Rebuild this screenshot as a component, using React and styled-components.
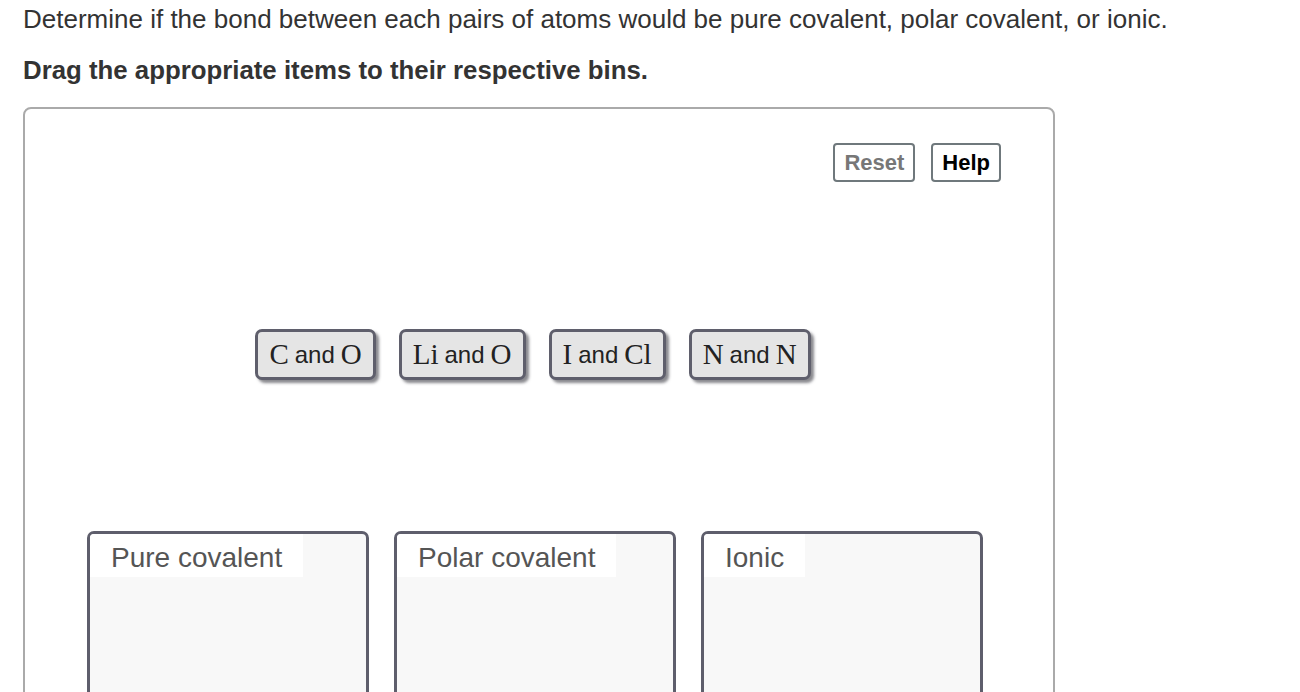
import React from 'react';
import styled, { createGlobalStyle } from 'styled-components';

const GlobalStyle = createGlobalStyle`
  html, body {
    margin: 0;
    padding: 0;
    background: #fff;
    font-family: "Liberation Sans", Arial, sans-serif;
    overflow: hidden;
  }
`;

const Page = styled.div`
  padding: 4px 23px 0 23px;
  width: 1032px;
`;

const Prompt = styled.p`
  margin: 0;
  font-size: 26px;
  line-height: 30px;
  color: #333;
  white-space: nowrap;
`;

const Instruction = styled.p`
  margin: 21px 0 0;
  font-size: 25.8px;
  line-height: 30px;
  font-weight: bold;
  color: #333;
  white-space: nowrap;
`;

const Panel = styled.div`
  margin-top: 22px;
  border: 2px solid #aaa;
  border-radius: 8px;
  height: 640px;
  box-sizing: border-box;
  padding: 34px 52px 0 62px;
`;

const Toolbar = styled.div`
  display: flex;
  justify-content: flex-end;
  gap: 16px;
`;

const ToolButton = styled.button`
  font-family: "Liberation Sans", Arial, sans-serif;
  font-size: 22px;
  font-weight: bold;
  height: 39px;
  padding: 0 9px;
  background: #fff;
  border: 2px solid #6f787c;
  border-radius: 4px;
  color: ${(p) => (p.muted ? '#777' : '#000')};
`;

const ChipRow = styled.div`
  display: flex;
  justify-content: center;
  gap: 23px;
  margin-top: 147px;
  padding-right: 22px;
`;

const Chip = styled.div`
  height: 51px;
  box-sizing: border-box;
  display: flex;
  align-items: center;
  padding: 0 11px;
  background: #e5e5e5;
  border: 3px solid #5f5f6c;
  border-radius: 7px;
  box-shadow: 3px 3px 3px rgba(40, 40, 50, 0.55);
  white-space: nowrap;
`;

const Atom = styled.span`
  font-family: "Liberation Serif", "Times New Roman", serif;
  font-size: 29px;
  color: #222;
`;

const Word = styled.span`
  font-family: "Liberation Sans", Arial, sans-serif;
  font-size: 24px;
  color: #222;
  margin: 0 6px 0 6px;
`;

const BinRow = styled.div`
  display: flex;
  gap: 25px;
  margin-top: 151px;
`;

const Bin = styled.div`
  width: 282px;
  height: 200px;
  box-sizing: border-box;
  background: #f8f8f8;
  border: 3px solid #5e5e6c;
  border-radius: 7px;
`;

const BinLabel = styled.div`
  display: inline-block;
  background: #fff;
  height: 43px;
  line-height: 48px;
  padding: 0 21px;
  font-size: 28px;
  color: #555;
  border-top-left-radius: 4px;
`;

const pairs = [
  ['C', 'O'],
  ['Li', 'O'],
  ['I', 'Cl'],
  ['N', 'N'],
];

const bins = ['Pure covalent', 'Polar covalent', 'Ionic'];

export default function App() {
  return (
    <>
      <GlobalStyle />
      <Page>
        <Prompt>
          Determine if the bond between each pairs of atoms would be pure covalent, polar covalent, or ionic.
        </Prompt>
        <Instruction>Drag the appropriate items to their respective bins.</Instruction>
        <Panel>
          <Toolbar>
            <ToolButton muted>Reset</ToolButton>
            <ToolButton>Help</ToolButton>
          </Toolbar>
          <ChipRow>
            {pairs.map(([a, b]) => (
              <Chip key={a + b}>
                <Atom>{a}</Atom>
                <Word>and</Word>
                <Atom>{b}</Atom>
              </Chip>
            ))}
          </ChipRow>
          <BinRow>
            {bins.map((name) => (
              <Bin key={name}>
                <BinLabel>{name}</BinLabel>
              </Bin>
            ))}
          </BinRow>
        </Panel>
      </Page>
    </>
  );
}
